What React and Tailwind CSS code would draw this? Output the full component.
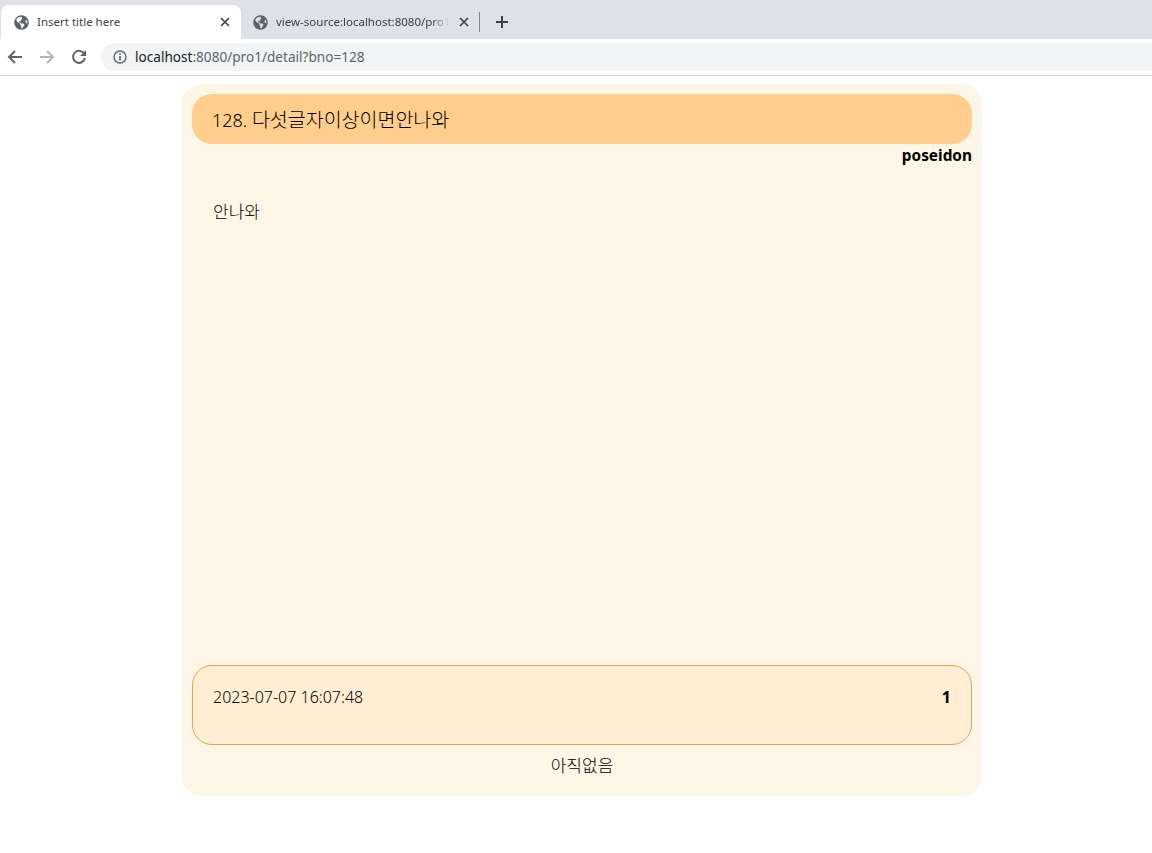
import { FaGlobeAmericas } from "react-icons/fa";

const Globe = () => <FaGlobeAmericas className="w-[15px] h-[15px] shrink-0 text-[#5f6368]" />;

const Close = () => (
  <svg className="w-[10px] h-[10px] shrink-0" viewBox="0 0 10 10">
    <path d="M1 1 L9 9 M9 1 L1 9" stroke="#3c4043" strokeWidth="1.6" fill="none" />
  </svg>
);

const Chrome = () => (
  <>
    <div className="h-[39px] bg-[#dee1e6] flex items-end pl-[1px]">
      <div className="w-[240px] shrink-0 h-[34px] bg-white rounded-t-[8px] flex items-center pl-[13px] pr-[11px]">
        <Globe />
        <div className="ml-[8px] flex-1 text-[11.5px] text-[#3c4043] whitespace-nowrap">Insert title here</div>
        <Close />
      </div>
      <div className="w-[239px] shrink-0 h-[34px] flex items-center pl-[12px]">
        <Globe />
        <div className="ml-[8px] w-[173px] shrink-0 overflow-hidden text-[11.5px] text-[#3c4043] whitespace-nowrap [mask-image:linear-gradient(to_right,black_90%,transparent)]">
          view-source:localhost:8080/pro1/detail?bno=128
        </div>
        <div className="ml-[10px]">
          <Close />
        </div>
        <div className="ml-[10px] w-px h-[20px] bg-[#80868b]" />
      </div>
      <div className="h-[34px] flex items-center ml-[15px]">
        <svg className="w-[14px] h-[14px]" viewBox="0 0 14 14">
          <path d="M7 1 V13 M1 7 H13" stroke="#3c4043" strokeWidth="2" fill="none" />
        </svg>
      </div>
    </div>
    <div className="h-[37px] bg-white border-b border-[#d9dadc] flex items-center">
      <svg className="ml-[7px] w-[16px] h-[16px]" viewBox="0 0 16 16">
        <path d="M15 8 H2 M8 2 L2 8 L8 14" stroke="#5f6368" strokeWidth="2" fill="none" />
      </svg>
      <svg className="ml-[16px] w-[16px] h-[16px]" viewBox="0 0 16 16">
        <path d="M1 8 H14 M8 2 L14 8 L8 14" stroke="#b4b6b9" strokeWidth="2" fill="none" />
      </svg>
      <svg className="ml-[16px] w-[16px] h-[16px]" viewBox="0 0 16 16">
        <path d="M13.4 5 A6 6 0 1 0 14 9" stroke="#5f6368" strokeWidth="2" fill="none" />
        <path d="M15 1 V7 H9 Z" fill="#5f6368" />
      </svg>
      <div className="ml-[14px] flex-1 h-[28px] bg-[#f1f3f4] rounded-l-full flex items-center pl-[12px]">
        <svg className="w-[14px] h-[14px]" viewBox="0 0 14 14">
          <circle cx="7" cy="7" r="6" stroke="#5f6368" strokeWidth="1.4" fill="none" />
          <path d="M7 6 V10.5 M7 3.4 V5" stroke="#5f6368" strokeWidth="1.6" fill="none" />
        </svg>
        <div className="ml-[8px] text-[13.6px] text-[#5f6368] whitespace-nowrap">
          <span className="text-[#202124]">localhost</span>:8080/pro1/detail?bno=128
        </div>
      </div>
    </div>
  </>
);

export default function App() {
  return (
    <div className="min-h-[853px] bg-white font-['Noto_Sans','Noto_Sans_CJK_KR',sans-serif] text-black">
      <Chrome />
      <div className="w-[800px] h-[712px] mt-[8px] ml-[182px] p-[10px] bg-[#fdf5e6] rounded-[20px] flex flex-col">
        <div className="h-[50px] shrink-0 bg-[#ffcd8c] rounded-[20px] pl-[20px] pt-[2px] flex items-center text-[18px] font-light">
          <span className="whitespace-pre">128. </span>
          <span className="text-[19.5px]">다섯글자이상이면안나와</span>
        </div>
        <div className="text-right font-bold text-[15.4px] leading-[22px] pt-px">poseidon</div>
        <div className="flex-1 pt-[33px] pl-[21px] text-[17px] leading-[24px] font-light">안나와</div>
        <div className="h-[80px] shrink-0 bg-[#ffeed4] border border-[#dda55a] rounded-[20px] px-[20px] pt-[20px] flex justify-between text-[16px] leading-[22px]">
          <div className="font-light">2023-07-07 16:07:48</div>
          <div className="font-bold">1</div>
        </div>
        <div className="h-[41px] shrink-0 pt-px text-center text-[17px] leading-[40px] font-light">아직없음</div>
      </div>
    </div>
  );
}
